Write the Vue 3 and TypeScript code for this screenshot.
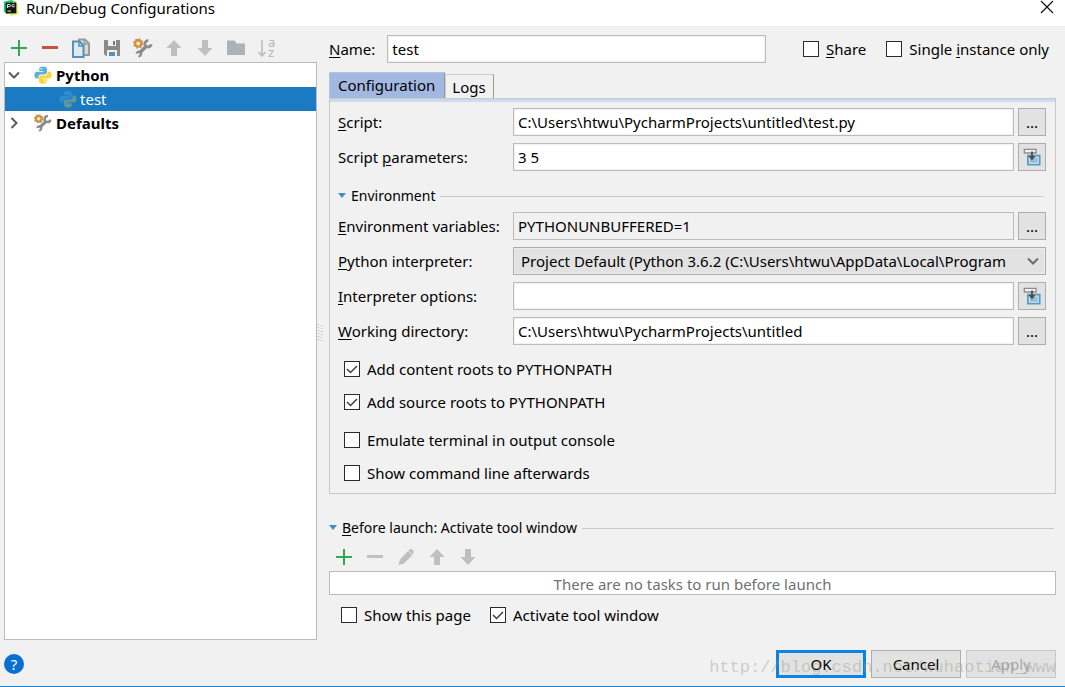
<script setup lang="ts">
import { reactive, ref } from 'vue'

type Label = [before: string, key: string, after: string]

interface Field {
  id: string
  label: Label
  kind: 'text' | 'select'
  action?: 'browse' | 'insert'
  readonly?: boolean
}

interface Option {
  id: string
  label: Label
}

const name = ref('test')
const activeTab = ref('Configuration')
const tabs = ['Configuration', 'Logs']

const interpreter = 'Project Default (Python 3.6.2 (C:\\Users\\htwu\\AppData\\Local\\Program'

const scriptFields: Field[] = [
  { id: 'script', label: ['', 'S', 'cript:'], kind: 'text', action: 'browse' },
  { id: 'params', label: ['Script ', 'p', 'arameters:'], kind: 'text', action: 'insert' },
]

const environmentFields: Field[] = [
  { id: 'env', label: ['', 'E', 'nvironment variables:'], kind: 'text', action: 'browse', readonly: true },
  { id: 'interpreter', label: ['', 'P', 'ython interpreter:'], kind: 'select' },
  { id: 'options', label: ['', 'I', 'nterpreter options:'], kind: 'text', action: 'insert' },
  { id: 'workdir', label: ['', 'W', 'orking directory:'], kind: 'text', action: 'browse' },
]

const fieldGroups = [
  { id: 'main', title: '', fields: scriptFields },
  { id: 'environment', title: 'Environment', fields: environmentFields },
]

const values = reactive<Record<string, string>>({
  script: 'C:\\Users\\htwu\\PycharmProjects\\untitled\\test.py',
  params: '3 5',
  env: 'PYTHONUNBUFFERED=1',
  interpreter,
  options: '',
  workdir: 'C:\\Users\\htwu\\PycharmProjects\\untitled',
})

const checks = reactive<Record<string, boolean>>({
  share: false,
  single: false,
  content: true,
  source: true,
  emulate: false,
  command: false,
  showPage: false,
  activate: true,
})

const headerOptions: Option[] = [
  { id: 'share', label: ['', 'S', 'hare'] },
  { id: 'single', label: ['Single ', 'i', 'nstance only'] },
]

const optionGroups: Option[][] = [
  [
    { id: 'content', label: ['Add content roots to PYTHONPATH', '', ''] },
    { id: 'source', label: ['Add source roots to PYTHONPATH', '', ''] },
  ],
  [
    { id: 'emulate', label: ['Emulate terminal in output console', '', ''] },
    { id: 'command', label: ['Show command line afterwards', '', ''] },
  ],
]

const launchOptions: Option[] = [
  { id: 'showPage', label: ['Show this page', '', ''] },
  { id: 'activate', label: ['Activate tool window', '', ''] },
]

const treeTools = [
  { icon: 'add', title: 'Add', disabled: false },
  { icon: 'remove', title: 'Remove', disabled: false },
  { icon: 'copy', title: 'Copy', disabled: false },
  { icon: 'save', title: 'Save', disabled: false },
  { icon: 'settings', title: 'Edit defaults', disabled: false },
  { icon: 'up', title: 'Move up', disabled: true },
  { icon: 'down', title: 'Move down', disabled: true },
  { icon: 'folder', title: 'New folder', disabled: true },
]

const taskTools = [
  { icon: 'add', title: 'Add task', disabled: false },
  { icon: 'remove-off', title: 'Remove task', disabled: true },
  { icon: 'edit', title: 'Edit task', disabled: true },
  { icon: 'up', title: 'Move task up', disabled: true },
  { icon: 'down', title: 'Move task down', disabled: true },
]
</script>

<template>
  <svg class="sprite" aria-hidden="true">
    <symbol id="i-add" viewBox="0 0 20 20">
      <path d="M10 2v16M2 10h16" stroke="#2fa84f" stroke-width="2" fill="none" />
    </symbol>
    <symbol id="i-remove" viewBox="0 0 20 20">
      <path d="M2 8h16v3H2z" fill="#c75246" />
    </symbol>
    <symbol id="i-remove-off" viewBox="0 0 20 20">
      <path d="M2 8h16v3H2z" fill="#c1c1c1" />
    </symbol>
    <symbol id="i-copy" viewBox="0 0 20 20">
      <path d="M8 1.5h6l4 4V17H8z" fill="#d9d9d9" stroke="#9b9b9b" stroke-width="2" />
      <path d="M13.5 1v5H19" fill="none" stroke="#9b9b9b" stroke-width="1.5" />
      <path d="M2 3.5h6.5l4 4V19H2z" fill="#dfe9f0" stroke="#5592b8" stroke-width="2" />
      <path d="M8 3v5h5" fill="none" stroke="#5592b8" stroke-width="1.5" />
    </symbol>
    <symbol id="i-save" viewBox="0 0 20 20">
      <path d="M2 2h16v16H4l-2-2z" fill="#8a8a8a" />
      <path d="M6 2h8v6H6z" fill="#f1f1f1" />
      <path d="M11 3h2v4h-2z" fill="#777777" />
      <path d="M5 12h10v6H5z" fill="#f1f1f1" />
      <path d="M7 14h6v4H7z" fill="#5292bd" />
    </symbol>
    <symbol id="i-settings" viewBox="0 0 20 20">
      <path d="M6 15.500 13 8.500" stroke="#8c8c8c" stroke-width="3.600" />
      <path d="M15.400 2.600a3.200 3.200 0 1 0 2.800 3.600" fill="none" stroke="#8c8c8c" stroke-width="2.800" />
      <path d="M3.600 15.600a2.300 2.300 0 1 1 1.800 2.600" fill="none" stroke="#8c8c8c" stroke-width="2.200" />
      <circle cx="5.200" cy="5.400" r="3.200" fill="#f5e3c8" stroke="#cf9040" stroke-width="2.400" />
      <circle cx="5.200" cy="5.400" r="4.600" fill="none" stroke="#cf9040" stroke-width="1.200" stroke-dasharray="1.8 1.81" />
    </symbol>
    <symbol id="i-up" viewBox="0 0 20 20">
      <path d="M10 2l7.500 8H13v8H7v-8H2.500z" fill="#bfbfbf" />
    </symbol>
    <symbol id="i-down" viewBox="0 0 20 20">
      <path d="M10 18l7.500-8H13V2H7v8H2.500z" fill="#bfbfbf" />
    </symbol>
    <symbol id="i-folder" viewBox="0 0 20 20">
      <path d="M1 2.500h7.500l2 3H19V17H1z" fill="#a9b3b9" />
    </symbol>
    <symbol id="i-edit" viewBox="0 0 20 20">
      <path d="M2.500 18 4 12.500 12 4l4.200 4.200L8 16.500z" fill="#bfbfbf" />
      <path d="M12.400 3.600 14 2.200q1.400-.8 2.700.6t.9 2.600L16.500 7.800z" fill="#bfbfbf" />
    </symbol>
    <symbol id="i-python" viewBox="0 0 24 24">
      <path
        d="M12 .5C8 .5 7 2 7 4v2.500h5.500v1H4.500C2 7.500.5 9 .5 12s1.500 4.800 3.500 4.800h2V14.500c0-2 1.500-3.300 3.300-3.300h5.200c1.600 0 2.800-1.200 2.800-2.800V4c0-2-1.600-3.500-5.300-3.500z"
        fill="#5fb1dd"
      />
      <path
        d="M12 23.500c4 0 5-1.500 5-3.500v-2.500h-5.500v-1h8c2.500 0 4-1.500 4-4.500s-1.500-4.800-3.500-4.800h-2v2.300c0 2-1.500 3.300-3.300 3.300H9.500c-1.600 0-2.800 1.200-2.800 2.800V20c0 2 1.600 3.500 5.300 3.500z"
        fill="#fdd535"
      />
      <circle cx="9.600" cy="3.800" r="1" fill="#ffffff" />
      <circle cx="14.400" cy="20.200" r="1" fill="#ffffff" />
    </symbol>
    <symbol id="i-insert" viewBox="0 0 20 20">
      <path d="M5.500 8.500h13v10h-13z" fill="#9dbdd2" stroke="#4d9cc9" stroke-width="2" />
      <path d="M7 10h10v7H7z" fill="none" stroke="#dcebf4" />
      <path d="M1.500 1.500h13v4h-13z" fill="#f4f4f4" stroke="#8d8d8d" stroke-width="1.500" />
      <path d="M9 4h2v5h3l-4 5-4-5h3z" fill="#4f4f4f" />
    </symbol>
  </svg>

  <div class="dialog">
    <header class="titlebar">
      <svg class="app-icon" viewBox="0 0 18 18" aria-hidden="true">
        <path d="M1 2 9 0l6 2-2 12-8 2-4-3z" fill="#22c77e" />
        <path d="m12 1 5 4-1 5 2 5-9 3-3-3z" fill="#e6ee55" />
        <path d="M3 3h12v12H3z" fill="#151515" />
        <path d="M5 9V5h2q1.500 0 1.500 1.200T7 7.500H5M13 5.500q-3-1-3 1t3 1M5 12.500h4" fill="none" stroke="#ffffff" />
      </svg>
      <h1>Run/Debug Configurations</h1>
      <button class="close" type="button" aria-label="Close">
        <svg viewBox="0 0 14 14" aria-hidden="true">
          <path d="M1 1l12 12M13 1 1 13" stroke="#111111" stroke-width="1.200" />
        </svg>
      </button>
    </header>

    <main class="content">
      <section class="sidebar" aria-label="Configurations">
        <div class="toolbar">
          <button v-for="t in treeTools" :key="t.icon" type="button" :aria-label="t.title" :disabled="t.disabled">
            <svg aria-hidden="true"><use :href="`#i-${t.icon}`" /></svg>
          </button>
          <button type="button" aria-label="Sort" disabled>
            <svg class="sort" viewBox="0 0 20 20" aria-hidden="true">
              <path d="M5 2v16M1.500 14 5 18l3.500-4" />
              <text x="11" y="9">a</text>
              <text x="11" y="19">z</text>
            </svg>
          </button>
        </div>
        <ul class="tree">
          <li class="group">
            <svg class="arrow" viewBox="0 0 12 12" aria-hidden="true"><path d="M1 3.500 6 8.500l5-5" /></svg>
            <svg class="node-icon" aria-hidden="true"><use href="#i-python" /></svg>
            <span>Python</span>
          </li>
          <li class="leaf selected">
            <svg class="node-icon" aria-hidden="true"><use href="#i-python" /></svg>
            <span>test</span>
          </li>
          <li class="group">
            <svg class="arrow" viewBox="0 0 12 12" aria-hidden="true"><path d="m3.500 1 5 5-5 5" /></svg>
            <svg class="node-icon" aria-hidden="true"><use href="#i-settings" /></svg>
            <span>Defaults</span>
          </li>
        </ul>
      </section>

      <div class="splitter" role="separator" aria-orientation="vertical">
        <svg viewBox="0 0 6 18" aria-hidden="true">
          <path d="M1 0v18M5 1v17" stroke="#b4b4b4" stroke-width="1" stroke-dasharray="1 2" />
          <path d="M3 1v17" stroke="#cccccc" stroke-width="1" stroke-dasharray="1 2" />
        </svg>
      </div>

      <section class="editor" aria-label="Run configuration">
        <div class="name-row">
          <label for="name"><u>N</u>ame:</label>
          <input id="name" v-model="name" class="field" type="text" />
          <div class="header-options">
            <label v-for="o in headerOptions" :key="o.id" class="check">
              <span class="box">
                <input v-model="checks[o.id]" type="checkbox" />
                <svg viewBox="0 0 16 16" aria-hidden="true"><path d="m3 8 3.500 3.500L13 5" /></svg>
              </span>
              <span>{{ o.label[0] }}<u>{{ o.label[1] }}</u>{{ o.label[2] }}</span>
            </label>
          </div>
        </div>

        <div class="tabs" role="tablist">
          <button
            v-for="t in tabs"
            :key="t"
            type="button"
            role="tab"
            :aria-selected="activeTab === t"
            :class="{ active: activeTab === t }"
            @click="activeTab = t"
          >
            {{ t }}
          </button>
        </div>

        <div class="panel" role="tabpanel">
          <template v-for="g in fieldGroups" :key="g.id">
            <h2 v-if="g.title" class="section-title">
              <svg viewBox="0 0 8 6" aria-hidden="true"><path d="M0 0h8L4 5z" /></svg>
              <span>{{ g.title }}</span>
            </h2>
            <div class="fields">
              <div v-for="f in g.fields" :key="f.id" class="field-row">
                <label :for="f.id">{{ f.label[0] }}<u>{{ f.label[1] }}</u>{{ f.label[2] }}</label>
                <input
                  v-if="f.kind === 'text'"
                  :id="f.id"
                  v-model="values[f.id]"
                  class="field"
                  type="text"
                  :readonly="f.readonly"
                />
                <div v-else class="combo">
                  <select :id="f.id" v-model="values[f.id]">
                    <option>{{ interpreter }}</option>
                  </select>
                  <svg viewBox="0 0 12 12" aria-hidden="true"><path d="M1 3.500 6 8.500l5-5" /></svg>
                </div>
                <button v-if="f.action === 'browse'" class="side-button" type="button" aria-label="Browse">...</button>
                <button v-if="f.action === 'insert'" class="side-button" type="button" aria-label="Edit in dialog">
                  <svg aria-hidden="true"><use href="#i-insert" /></svg>
                </button>
              </div>
            </div>
          </template>

          <div class="option-groups">
            <div v-for="(group, i) in optionGroups" :key="i" class="option-group">
              <label v-for="o in group" :key="o.id" class="check">
                <span class="box">
                  <input v-model="checks[o.id]" type="checkbox" />
                  <svg viewBox="0 0 16 16" aria-hidden="true"><path d="m3 8 3.500 3.500L13 5" /></svg>
                </span>
                <span>{{ o.label[0] }}</span>
              </label>
            </div>
          </div>
        </div>

        <h2 class="section-title launch-title">
          <svg viewBox="0 0 8 6" aria-hidden="true"><path d="M0 0h8L4 5z" /></svg>
          <span><u>B</u>efore launch: Activate tool window</span>
        </h2>
        <div class="toolbar task-toolbar">
          <button v-for="t in taskTools" :key="t.icon" type="button" :aria-label="t.title" :disabled="t.disabled">
            <svg aria-hidden="true"><use :href="`#i-${t.icon}`" /></svg>
          </button>
        </div>
        <div class="task-list">There are no tasks to run before launch</div>
        <div class="launch-options">
          <label v-for="o in launchOptions" :key="o.id" class="check">
            <span class="box">
              <input v-model="checks[o.id]" type="checkbox" />
              <svg viewBox="0 0 16 16" aria-hidden="true"><path d="m3 8 3.500 3.500L13 5" /></svg>
            </span>
            <span>{{ o.label[0] }}</span>
          </label>
        </div>
      </section>
    </main>

    <footer class="footer">
      <button class="help" type="button" aria-label="Help">?</button>
      <div class="actions">
        <button class="default" type="button">OK</button>
        <button type="button">Cancel</button>
        <button type="button" disabled>Apply</button>
        <span class="watermark">http://blog.csdn.net/wuhaotian_www</span>
      </div>
    </footer>
  </div>
</template>

<style>
body {
  margin: 0;
  background: #f1f1f1;
}
</style>

<style scoped>
.sprite {
  position: absolute;
  width: 0;
  height: 0;
}

.dialog,
.dialog *,
.dialog *::before,
.dialog *::after {
  box-sizing: border-box;
}

.dialog {
  display: flex;
  flex-direction: column;
  min-height: 100vh;
  background: #f1f1f1;
  border-bottom: 1px solid #1883d7;
  color: #000000;
  font-family: 'Noto Sans', 'Open Sans', sans-serif;
  font-size: 15px;
  line-height: 20px;
}

.dialog button,
.dialog input,
.dialog select {
  margin: 0;
  font: inherit;
  color: inherit;
}

u {
  text-decoration: underline;
  text-underline-offset: 2px;
  text-decoration-thickness: 1px;
}

.titlebar {
  display: flex;
  align-items: flex-start;
  gap: 6px;
  height: 26px;
  padding: 0 11px 0 2px;
  background: #ffffff;
}

.app-icon {
  width: 18px;
  height: 16px;
}

.titlebar h1 {
  flex: 1;
  margin: 0;
  font-size: 15px;
  font-weight: 400;
  line-height: 16px;
}

.close {
  display: flex;
  padding: 0;
  border: 0;
  background: none;
}

.close svg {
  width: 14px;
  height: 14px;
}

.content {
  display: flex;
  flex: 1;
}

.sidebar {
  display: flex;
  flex-direction: column;
  flex: 0 0 313px;
  margin-left: 4px;
  padding-top: 10px;
}

.toolbar {
  display: flex;
}

.toolbar button {
  display: flex;
  align-items: center;
  justify-content: center;
  width: 31px;
  height: 24px;
  padding: 0 2px 0 0;
  border: 0;
  background: none;
}

.toolbar svg {
  width: 20px;
  height: 20px;
}

.sort path {
  fill: none;
  stroke: #bdbdbd;
  stroke-width: 1.6;
}

.sort text {
  fill: #b5b5b5;
  font-size: 13px;
}

.tree {
  flex: 1;
  margin: 2px 0 0;
  padding: 0;
  list-style: none;
  background: #ffffff;
  border: 1px solid #bcbcbc;
}

.tree li {
  display: flex;
  align-items: center;
  height: 24px;
}

.tree .group {
  gap: 4px;
  padding-left: 3px;
  font-weight: 700;
}

.tree .leaf {
  gap: 3px;
  padding-left: 54px;
}

.tree .selected {
  background: #1a7bc3;
  color: #ffffff;
}

.selected .node-icon {
  opacity: 0.3;
}

.arrow {
  width: 12px;
  height: 12px;
  margin-right: 10px;
  fill: none;
  stroke: #5c5c5c;
  stroke-width: 2;
}

.node-icon {
  width: 18px;
  height: 18px;
}

.splitter {
  display: flex;
  align-items: center;
  width: 12px;
}

.splitter svg {
  width: 6px;
  height: 18px;
}

.editor {
  flex: 1;
  min-width: 0;
  margin-right: 9px;
  padding-top: 9px;
}

.name-row {
  display: flex;
  align-items: center;
  gap: 12px;
}

.field {
  flex: 1;
  min-width: 0;
  height: 28px;
  padding: 0 4px;
  border: 1px solid #bcbcbc;
  border-radius: 0;
  outline: none;
  background: #ffffff;
  box-shadow: inset 0 0 0 1px #f1f1f1;
}

.field:read-only {
  background: #f1f1f1;
}

.header-options {
  display: flex;
  gap: 20px;
  margin: 0 7px 0 25px;
}

.check {
  display: flex;
  align-items: center;
  gap: 7px;
  white-space: nowrap;
}

.box {
  display: grid;
  width: 16px;
  height: 16px;
}

.box > * {
  grid-area: 1 / 1;
}

.box input {
  appearance: none;
  width: 16px;
  height: 16px;
  background: #ffffff;
  border: 1px solid #2b2b2b;
}

.box svg {
  visibility: hidden;
  width: 16px;
  height: 16px;
  fill: none;
  stroke: #3f3f3f;
  stroke-width: 1.5;
  pointer-events: none;
}

.box input:checked + svg {
  visibility: visible;
}

.tabs {
  display: flex;
  align-items: flex-end;
  margin-top: 9px;
}

.tabs button {
  height: 24px;
  padding: 0 7px 0 6px;
  background: #f1f1f1;
  border: 1px solid #cccccc;
  border-right: 1px solid #9a9a9a;
  border-bottom: 0;
}

.tabs .active {
  height: 26px;
  padding: 0 9px 2px 8px;
  background: #a2b8e0;
  border-color: #b8c4dc #9a9a9a #cccccc #b8c4dc;
}

.panel {
  padding: 5px 9px 10px 8px;
  border: 1px solid #c8c8c8;
  box-shadow: inset 0 3px 0 #c9dcf2;
}

.fields {
  display: flex;
  flex-direction: column;
  gap: 7px;
  padding-top: 4px;
}

.field-row {
  display: flex;
  align-items: center;
  gap: 4px;
}

.field-row label {
  flex: 0 0 171px;
  white-space: nowrap;
}

.side-button {
  display: flex;
  align-items: center;
  justify-content: center;
  width: 28px;
  height: 28px;
  padding: 0;
  background: #e2e2e2;
  border: 1px solid #adadad;
}

.side-button svg {
  width: 18px;
  height: 18px;
}

.combo {
  display: grid;
  flex: 1;
  align-items: center;
  min-width: 0;
}

.combo > * {
  grid-area: 1 / 1;
}

.combo select {
  appearance: none;
  width: 100%;
  min-width: 0;
  height: 28px;
  padding: 0 22px 0 7px;
  background: #e2e2e2;
  border: 1px solid #adadad;
  border-radius: 0;
  box-shadow: inset 0 0 0 1px #ececec;
}

.combo svg {
  justify-self: end;
  width: 12px;
  height: 12px;
  margin-right: 7px;
  fill: none;
  stroke: #6a6a6a;
  stroke-width: 2;
  pointer-events: none;
}

.section-title {
  display: flex;
  align-items: center;
  gap: 5px;
  height: 20px;
  margin: 15px 0 2px;
  font-size: 14px;
  font-weight: 400;
}

.section-title svg {
  width: 8px;
  height: 6px;
  fill: #3c8fc0;
}

.section-title::after {
  content: '';
  flex: 1;
  height: 1px;
  margin-right: 2px;
  background: #c8c8c8;
}

.option-groups {
  display: flex;
  flex-direction: column;
  gap: 18px;
  padding: 14px 0 0 6px;
}

.option-group {
  display: flex;
  flex-direction: column;
  gap: 13px;
}

.launch-title {
  margin: 24px 0 7px;
}

.task-toolbar {
  margin-bottom: 2px;
}

.task-list {
  height: 24px;
  background: #ffffff;
  border: 1px solid #bcbcbc;
  color: #707070;
  line-height: 24px;
  text-align: center;
}

.launch-options {
  display: flex;
  gap: 19px;
  padding: 10px 0 0 12px;
}

.footer {
  display: flex;
  align-items: center;
  justify-content: space-between;
  padding: 10px 9px 8px 4px;
}

.help {
  width: 20px;
  height: 20px;
  padding: 0;
  border: 0;
  border-radius: 50%;
  background: #0a6fd0;
}

.dialog .help {
  color: #ffffff;
}

.actions {
  position: relative;
  display: flex;
  gap: 5px;
}

.actions button {
  width: 90px;
  height: 28px;
  padding: 0;
  background: #e2e2e2;
  border: 1px solid #adadad;
}

.actions .default {
  border: 3px solid #0a84e0;
}

.dialog .actions button:disabled {
  border-color: #c8c8c8;
  color: #a8a8a8;
}

.watermark {
  position: absolute;
  right: 0;
  bottom: 0;
  color: rgba(150, 150, 135, 0.4);
  font-family: 'Liberation Mono', monospace;
  font-size: 17px;
  line-height: 20px;
  white-space: nowrap;
  pointer-events: none;
}
</style>
